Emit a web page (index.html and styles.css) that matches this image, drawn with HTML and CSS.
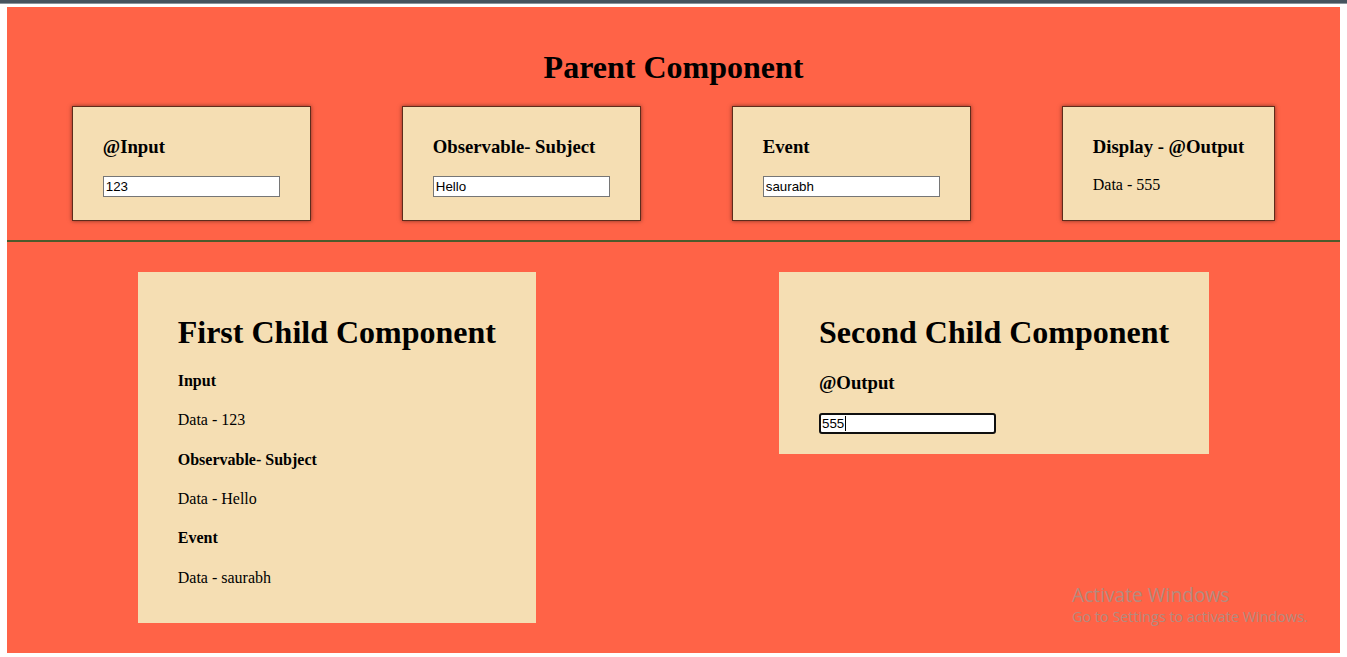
FILE: index.html
```html
<!DOCTYPE html>
<html>
<head>
<meta charset="utf-8">
<title>Parent Component</title>
<link rel="stylesheet" href="styles.css">
</head>
<body>
<div class="topbar"></div>
<main class="app">
  <section class="parent">
    <h1 class="parent-title">Parent Component</h1>
    <div class="cards">
      <div class="card">
        <h3>@Input</h3>
        <input class="field" type="text" value="123">
      </div>
      <div class="card">
        <h3>Observable- Subject</h3>
        <input class="field" type="text" value="Hello">
      </div>
      <div class="card">
        <h3>Event</h3>
        <input class="field" type="text" value="saurabh">
      </div>
      <div class="card">
        <h3>Display - @Output</h3>
        <p>Data - 555</p>
      </div>
    </div>
  </section>
  <div class="divider"></div>
  <section class="children">
    <div class="child">
      <h1>First Child Component</h1>
      <h4>Input</h4>
      <p>Data - 123</p>
      <h4>Observable- Subject</h4>
      <p>Data - Hello</p>
      <h4>Event</h4>
      <p>Data - saurabh</p>
    </div>
    <div class="child">
      <h1>Second Child Component</h1>
      <h3>@Output</h3>
      <div class="field-wrap">
        <input class="field focused" type="text" value="555">
        <span class="caret"></span>
      </div>
    </div>
  </section>
  <div class="watermark">
    <div class="wm-title">Activate Windows</div>
    <div class="wm-sub">Go to Settings to activate Windows.</div>
  </div>
</main>
</body>
</html>
```
FILE: styles.css
```css
html, body {
  margin: 0;
  padding: 0;
  background: #ffffff;
}
body {
  font-family: "Liberation Serif", "Times New Roman", serif;
  color: #000;
  font-size: 16px;
}
.topbar {
  height: 3px;
  background: #46545f;
  border-bottom: 1px solid #8a949b;
}
.app {
  position: relative;
  margin: 3px 7px 4px 7px;
  background: #ff6347;
}
.parent {
  padding: 19px 0;
}
.parent-title {
  margin: 23px 0 19.88px;
  font-size: 32px;
  text-align: center;
}
.cards {
  display: flex;
  justify-content: center;
  gap: 91px;
}
.card {
  background: #f5deb3;
  border: 1px solid #5e2c1c;
  box-shadow: 0 0 4px rgba(0, 0, 0, 0.5);
  padding: 10px 30px;
}
.card h3 {
  font-size: 18.72px;
  margin: 18.72px 0;
}
.card p {
  margin: 16px 0;
}
.field {
  display: block;
  box-sizing: border-box;
  width: 177px;
  height: 21px;
  margin: 0;
  padding: 1px 2px;
  border: 1px solid #767676;
  border-radius: 0;
  background: #fff;
  font-family: "Liberation Sans", Arial, sans-serif;
  font-size: 13.33px;
  color: #000;
  outline: none;
}
.field.focused {
  border: 2px solid #101010;
  border-radius: 3px;
  padding: 0 1px;
}
.divider {
  height: 2px;
  background: #4d5a2b;
}
.children {
  display: flex;
  justify-content: center;
  align-items: flex-start;
  gap: 243px;
  padding: 30px 0;
}
.child {
  background: #f5deb3;
  padding: 20px 40px;
}
.child h1 {
  font-size: 32px;
  margin: 21.44px 0;
}
.child h3 {
  font-size: 18.72px;
  margin: 18.72px 0;
}
.child h4 {
  font-size: 16px;
  margin: 21.28px 0;
}
.child p {
  margin: 16px 0;
}
.field-wrap {
  position: relative;
}
.caret {
  position: absolute;
  left: 26px;
  top: 3px;
  width: 1px;
  height: 15px;
  background: #000;
}
.watermark {
  position: absolute;
  left: 1065px;
  top: 575px;
  color: #b38b7f;
  font-family: "Open Sans", "Noto Sans", sans-serif;
}
.wm-title {
  font-size: 19.2px;
  line-height: 25px;
}
.wm-sub {
  font-size: 14.4px;
  line-height: 20px;
}
```
